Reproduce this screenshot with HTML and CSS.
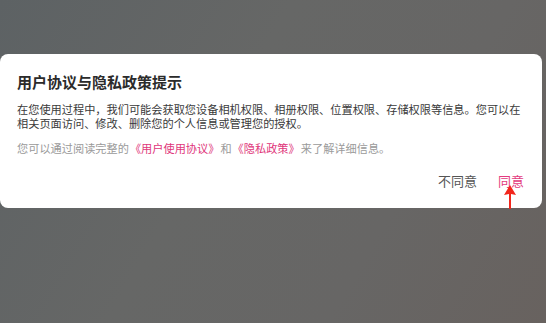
FILE: index.html
```html
<!DOCTYPE html>
<html lang="zh">
<head>
<meta charset="utf-8">
<link rel="stylesheet" href="styles.css">
</head>
<body>
<div class="screen">
  <div class="dialog">
    <h1 class="title">用户协议与隐私政策提示</h1>
    <p class="body">在您使用过程中，我们可能会获取您设备相机权限、相册权限、位置权限、存储权限等信息。您可以在相关页面访问、修改、删除您的个人信息或管理您的授权。</p>
    <p class="note">您可以通过阅读完整的<span class="link">《用户使用协议》</span>和<span class="link">《隐私政策》</span>来了解详细信息。</p>
    <div class="actions">
      <span class="btn">不同意</span>
      <span class="btn agree">同意
        <svg class="arrow" width="14" height="24" viewBox="0 0 14 24"><path d="M7 0 L13 10 L8 9 L8 24 L6 24 L6 9 L1 10 Z" fill="#f2261c"/></svg>
      </span>
    </div>
  </div>
</div>
</body>
</html>
```
FILE: styles.css
```css
html, body {
  margin: 0;
  padding: 0;
}
body {
  width: 546px;
  height: 323px;
  overflow: hidden;
  font-family: "Noto Sans CJK SC", "Noto Sans", sans-serif;
}
.screen {
  width: 546px;
  height: 323px;
  background: linear-gradient(120deg, #5d6264 0%, #666766 40%, #676665 70%, #68625f 100%);
  padding-top: 54px;
  box-sizing: border-box;
}
.dialog {
  width: 542px;
  height: 154px;
  background: #fff;
  border-radius: 8px;
  box-sizing: border-box;
  padding: 13px 19px 0 17px;
  display: flex;
  flex-direction: column;
}
.title {
  margin: 0;
  font-size: 15px;
  font-weight: 700;
  color: #2b2b2b;
  line-height: 30px;
}
.body {
  margin: 5px -4px 0 0;
  font-size: 11.2px;
  line-height: 14px;
  color: #3a3a3a;
}
.note {
  margin: 11px 0 0;
  font-size: 11.2px;
  line-height: 14px;
  color: #9a9a9a;
}
.link {
  color: #e0357a;
  margin: 0 1px;
}
.actions {
  margin: 17px -1px 0 0;
  display: flex;
  justify-content: flex-end;
  gap: 21px;
  font-size: 13px;
  line-height: 18px;
}
.btn {
  color: #555;
  position: relative;
}
.agree {
  color: #e33a80;
}
.arrow {
  position: absolute;
  left: 5px;
  top: 13px;
}
```
